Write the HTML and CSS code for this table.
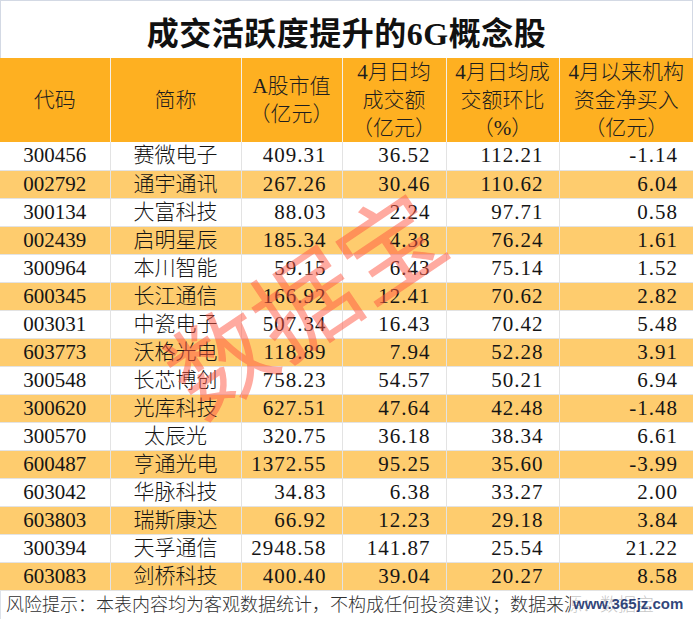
FILE: index.html
```html
<!DOCTYPE html>
<html lang="zh-CN">
<head>
<meta charset="utf-8">
<title>成交活跃度提升的6G概念股</title>
<link rel="stylesheet" href="styles.css">
</head>
<body>
<div class="sheet">
  <div class="title">成交活跃度提升的6G概念股</div>
  <table class="grid">
    <colgroup>
      <col class="c1"><col class="c2"><col class="c3"><col class="c4"><col class="c5"><col class="c6">
    </colgroup>
    <thead>
      <tr class="head">
        <th>代码</th>
        <th>简称</th>
        <th>A股市值<br>（亿元）</th>
        <th>4月日均<br>成交额<br>（亿元）</th>
        <th>4月日均成<br>交额环比<br>（%）</th>
        <th>4月以来机构<br>资金净买入<br>（亿元）</th>
      </tr>
    </thead>
    <tbody>
      <tr><td class="ctr">300456</td><td class="ctr">赛微电子</td><td class="num">409.31</td><td class="num">36.52</td><td class="num">112.21</td><td class="num">-1.14</td></tr>
      <tr class="alt"><td class="ctr">002792</td><td class="ctr">通宇通讯</td><td class="num">267.26</td><td class="num">30.46</td><td class="num">110.62</td><td class="num">6.04</td></tr>
      <tr><td class="ctr">300134</td><td class="ctr">大富科技</td><td class="num">88.03</td><td class="num">2.24</td><td class="num">97.71</td><td class="num">0.58</td></tr>
      <tr class="alt"><td class="ctr">002439</td><td class="ctr">启明星辰</td><td class="num">185.34</td><td class="num">4.38</td><td class="num">76.24</td><td class="num">1.61</td></tr>
      <tr><td class="ctr">300964</td><td class="ctr">本川智能</td><td class="num">59.15</td><td class="num">6.43</td><td class="num">75.14</td><td class="num">1.52</td></tr>
      <tr class="alt"><td class="ctr">600345</td><td class="ctr">长江通信</td><td class="num">166.92</td><td class="num">12.41</td><td class="num">70.62</td><td class="num">2.82</td></tr>
      <tr><td class="ctr">003031</td><td class="ctr">中瓷电子</td><td class="num">507.34</td><td class="num">16.43</td><td class="num">70.42</td><td class="num">5.48</td></tr>
      <tr class="alt"><td class="ctr">603773</td><td class="ctr">沃格光电</td><td class="num">118.89</td><td class="num">7.94</td><td class="num">52.28</td><td class="num">3.91</td></tr>
      <tr><td class="ctr">300548</td><td class="ctr">长芯博创</td><td class="num">758.23</td><td class="num">54.57</td><td class="num">50.21</td><td class="num">6.94</td></tr>
      <tr class="alt"><td class="ctr">300620</td><td class="ctr">光库科技</td><td class="num">627.51</td><td class="num">47.64</td><td class="num">42.48</td><td class="num">-1.48</td></tr>
      <tr><td class="ctr">300570</td><td class="ctr">太辰光</td><td class="num">320.75</td><td class="num">36.18</td><td class="num">38.34</td><td class="num">6.61</td></tr>
      <tr class="alt"><td class="ctr">600487</td><td class="ctr">亨通光电</td><td class="num">1372.55</td><td class="num">95.25</td><td class="num">35.60</td><td class="num">-3.99</td></tr>
      <tr><td class="ctr">603042</td><td class="ctr">华脉科技</td><td class="num">34.83</td><td class="num">6.38</td><td class="num">33.27</td><td class="num">2.00</td></tr>
      <tr class="alt"><td class="ctr">603803</td><td class="ctr">瑞斯康达</td><td class="num">66.92</td><td class="num">12.23</td><td class="num">29.18</td><td class="num">3.84</td></tr>
      <tr><td class="ctr">300394</td><td class="ctr">天孚通信</td><td class="num">2948.58</td><td class="num">141.87</td><td class="num">25.54</td><td class="num">21.22</td></tr>
      <tr class="alt"><td class="ctr">603083</td><td class="ctr">剑桥科技</td><td class="num">400.40</td><td class="num">39.04</td><td class="num">20.27</td><td class="num">8.58</td></tr>
    </tbody>
  </table>
  <div class="footer">风险提示：本表内容均为客观数据统计，不构成任何投资建议；数据来源：数据宝</div>
  <div class="stamp">数据宝</div>
  <div class="site">www.365jz.com</div>
</div>
</body>
</html>
```

FILE: styles.css
```css
html, body {
  margin: 0;
  padding: 0;
  background: #ffffff;
}

body {
  width: 693px;
  height: 619px;
  overflow: hidden;
  font-family: "Liberation Serif", "Noto Sans CJK SC", serif;
  font-weight: 300;
  color: #151515;
}

.sheet {
  position: relative;
  width: 693px;
  height: 619px;
  overflow: hidden;
}

.title {
  box-sizing: border-box;
  height: 58px;
  border-top: 1px solid #d3d9e4;
  border-left: 1px solid #d3d9e4;
  border-right: 1px solid #d3d9e4;
  display: flex;
  align-items: center;
  justify-content: center;
  padding-top: 2px;
  font-size: 32px;
  font-weight: bold;
  color: #111111;
  letter-spacing: 0.5px;
}

.grid {
  width: 693px;
  table-layout: fixed;
  border-collapse: collapse;
  border-spacing: 0;
}

.c1 { width: 110px; }
.c2 { width: 131px; }
.c3 { width: 101px; }
.c4 { width: 104px; }
.c5 { width: 113px; }
.c6 { width: 134px; }

.head {
  height: 84px;
  background: #feb021;
}

.head th {
  padding: 0;
  font-weight: 300;
  font-size: 21px;
  line-height: 28px;
  color: #1e1e1e;
  text-align: center;
  vertical-align: middle;
  border-right: 1px solid #f4efe6;
}

.head th:last-child {
  border-right: none;
}

.grid tbody tr {
  height: 28px;
  background: #ffffff;
}

.grid tbody tr.alt {
  background: #fecc6e;
}

.grid td {
  padding: 0;
  font-size: 21px;
  line-height: 27px;
  white-space: nowrap;
  border-bottom: 1px solid #e3e3e3;
  border-right: 1px solid #e3e3e3;
}

.grid td:last-child {
  border-right: none;
}

.ctr {
  text-align: center;
}

.num {
  text-align: right;
  letter-spacing: 1px;
  padding-right: 15px !important;
}

.footer {
  box-sizing: border-box;
  height: 29px;
  padding-left: 5px;
  font-size: 18px;
  line-height: 29px;
  color: #303030;
  white-space: nowrap;
  border-left: 1px solid #dde2ea;
}

.stamp {
  position: absolute;
  left: 134px;
  top: 246px;
  width: 336px;
  text-align: center;
  font-family: "Noto Sans CJK SC", sans-serif;
  font-weight: 400;
  font-size: 102px;
  line-height: 106px;
  letter-spacing: 0;
  color: rgba(255, 86, 66, 0.5);
  transform: rotate(-34deg);
  transform-origin: 50% 50%;
  pointer-events: none;
}

.site {
  position: absolute;
  left: 571px;
  top: 592px;
  font-family: "Liberation Sans", sans-serif;
  font-size: 15px;
  line-height: 24px;
  font-weight: bold;
  color: rgba(28, 52, 110, 0.92);
  background: rgba(255, 255, 255, 0.72);
  padding: 0 2px;
}
```
